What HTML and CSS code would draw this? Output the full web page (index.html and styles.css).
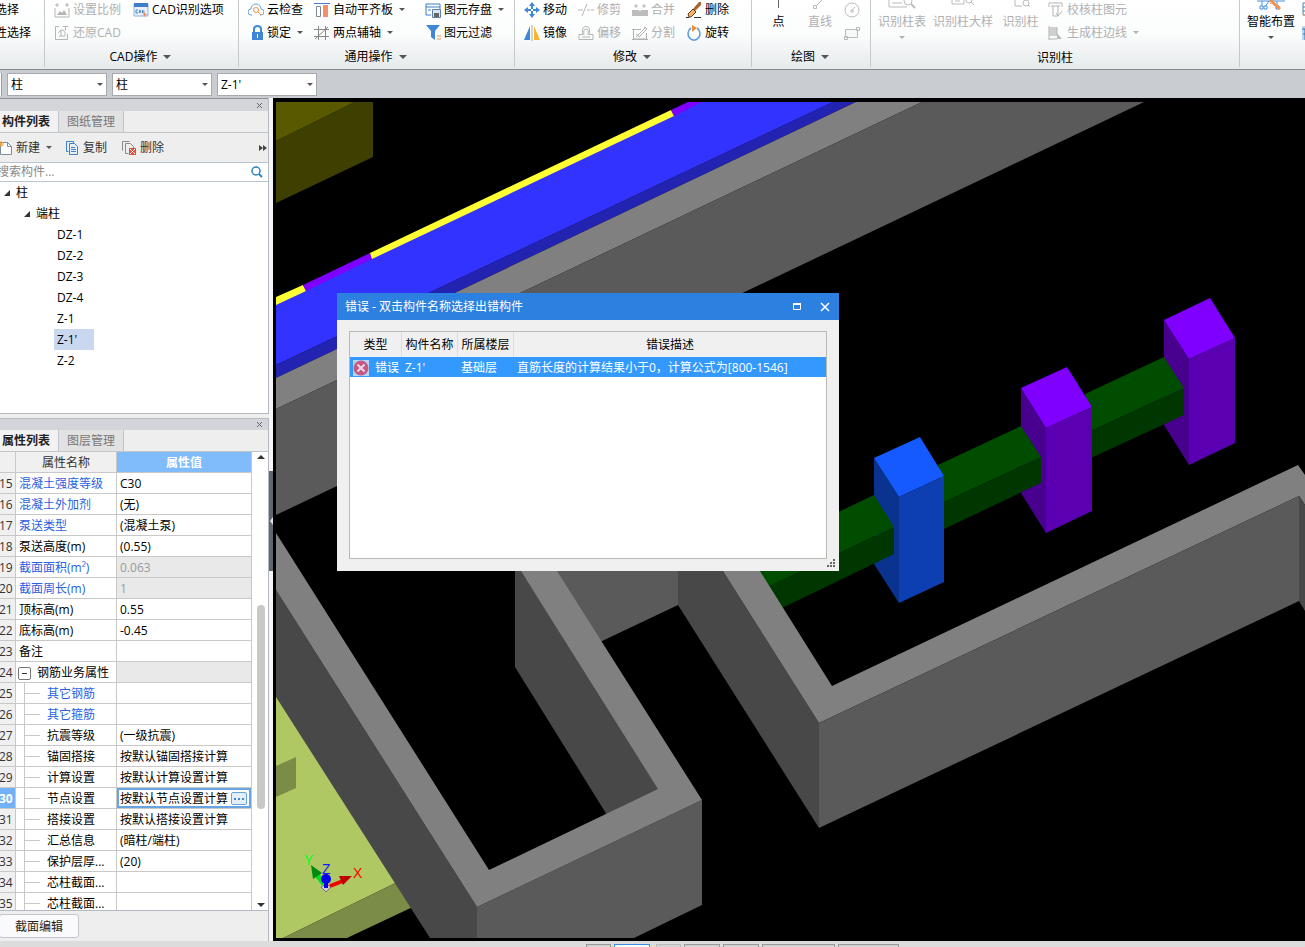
FILE: index.html
```html
<!DOCTYPE html>
<html lang="zh-CN">
<head>
    <meta charset="UTF-8">
    <meta name="viewport" content="width=device-width, initial-scale=1.0">
    <title>柱 - 构件列表</title>
    <link rel="stylesheet" href="styles.css">
</head>
<body>
    <header class="ribbon">
        <section class="group">
            <div class="tools tools-select">
                <button class="tool">选择</button>
                <button class="tool">性选择</button>
            </div>
        </section>

        <section class="group">
            <div class="tools tools-cad">
                <button class="tool" disabled>
                    <svg class="icon" viewBox="0 0 16 16"><path d="M1 3h4M3 1v4M11 3h4M13 1v4M1 6v9h14V6" fill="none" stroke="#b5b5b5"/><path d="M3 13l3-4 2 2 2-3 3 5z" fill="#b5b5b5"/></svg>
                    设置比例</button>
                <button class="tool">
                    <svg class="icon" viewBox="0 0 16 16"><path d="M1 2h14v12H1z" fill="#e8f1fb" stroke="#8db4de"/><path d="M1 1h14v4H1z" fill="#3d7fc9"/><path d="M5 8H3v3h2M6 11l1-3 1 3M9.500 8v3q3-1.500 0-3" fill="none" stroke="#4a86c8"/><path d="M10 9l4 4-2 .5-1 2z" fill="#f08a5a"/></svg>
                    CAD识别选项</button>
                <button class="tool" disabled>
                    <svg class="icon" viewBox="0 0 16 16"><path d="M5 1.500H1.500v13h12V9M9 1.500h5M11.500 1.500v4M4 8l3-3v6M7 5q5 0 4 6H5" fill="none" stroke="#b5b5b5"/></svg>
                    还原CAD</button>
            </div>
            <div class="caption">CAD操作 <i class="caret"></i></div>
        </section>

        <section class="group">
            <div class="tools tools-common">
                <button class="tool">
                    <svg class="icon" viewBox="0 0 16 16"><path d="M4 13H3a3 3 0 0 1 0-6 5 5 0 0 1 10 0 3 3 0 0 1 0 6h-1" fill="none" stroke="#6fa3d8"/><circle cx="8" cy="8" r="2.500" fill="none" stroke="#f09050"/><path d="M10 10l3 3" stroke="#f09050"/></svg>
                    云检查</button>
                <button class="tool">
                    <svg class="icon" viewBox="0 0 16 16"><path d="M0 1.500h16" stroke="#3d7fc9" stroke-width="1"/><path d="M2.500 4.500h4v10h-4z" fill="#fff" stroke="#7d8794"/><path d="M9 3h5v12H9z" fill="#f79069"/></svg>
                    自动平齐板 <i class="caret small"></i></button>
                <button class="tool">
                    <svg class="icon" viewBox="0 0 16 16"><path d="M1 2h14v3H1zM1 5v8h5M3 8h3M15 5v2" fill="none" stroke="#3d7fc9"/><path d="M7.500 7.500h8v8h-8z" fill="#d9e6f5" stroke="#5c7fa6"/><path d="M9 11h5v4H9z" fill="#666"/></svg>
                    图元存盘 <i class="caret small"></i></button>
                <button class="tool">
                    <svg class="icon" viewBox="0 0 16 16"><path d="M4 7h11v8H4z" fill="#3f86d6"/><path d="M6 7V4a3.500 3 0 0 1 7 0v3" fill="none" stroke="#3f86d6" stroke-width="2"/><path d="M9 9h1v4H9z" fill="#fff"/></svg>
                    锁定 <i class="caret small"></i></button>
                <button class="tool">
                    <svg class="icon" viewBox="0 0 16 16"><path d="M4.500 1v14M11.500 1v14M0 4.500h15M0 11.500h15M1 14L14 2" fill="none" stroke="#888"/></svg>
                    两点辅轴 <i class="caret small"></i></button>
                <button class="tool">
                    <svg class="icon" viewBox="0 0 16 16"><path d="M1 0h14l-5 6v9l-4-3V6z" fill="#3f86d6"/><path d="M12 11h4M12 14h4" stroke="#f09050"/></svg>
                    图元过滤</button>
            </div>
            <div class="caption">通用操作 <i class="caret"></i></div>
        </section>

        <section class="group">
            <div class="tools tools-modify">
                <button class="tool">
                    <svg class="icon" viewBox="0 0 16 16"><path d="M8 0l3 4H5zM8 16l3-4H5zM0 8l4-3v6zM16 8l-4-3v6z" fill="#3f86d6"/><path d="M8 4v3M8 9v3M4 8h3M9 8h3" stroke="#3f86d6" stroke-width="2"/></svg>
                    移动</button>
                <button class="tool" disabled>
                    <svg class="icon" viewBox="0 0 16 16"><path d="M0 8h5M9 8h3M13 8h3M4 14L9 2" fill="none" stroke="#b5b5b5"/></svg>
                    修剪</button>
                <button class="tool" disabled>
                    <svg class="icon" viewBox="0 0 16 16"><path d="M2 4h4M4 2v4M10 4h4M12 2v4" stroke="#b5b5b5"/><path d="M0 8h7v1h2V8h7v6H0z" fill="#bcbcbc"/></svg>
                    合并</button>
                <button class="tool">
                    <svg class="icon" viewBox="0 0 16 16"><path d="M0 15.500h3M8 15.500h7" stroke="#333"/><path d="M15 0l-2 0-6 7 2 2 6-6z" fill="#a8642c"/><path d="M7 7l3 3-5 5H3l-1-3z" fill="#f2b46c" stroke="#6b3b12"/></svg>
                    删除</button>
                <button class="tool">
                    <svg class="icon" viewBox="0 0 16 16"><path d="M6 1v14H0z" fill="#3f86d6"/><path d="M10 1v14h6z" fill="#f5b62e"/><path d="M8 0v16" stroke="#aaa"/></svg>
                    镜像</button>
                <button class="tool" disabled>
                    <svg class="icon" viewBox="0 0 16 16"><path d="M1 14.500v-5h4q-2-8 3-8t3 8h4v5zM4 12h8M6 10q-1-6 2-6t2 6" fill="none" stroke="#b5b5b5"/></svg>
                    偏移</button>
                <button class="tool" disabled>
                    <svg class="icon" viewBox="0 0 16 16"><path d="M0 4.500h9M1.500 4v10h13V8M0 14.500h16M4 12L14 2M4 9l4 3M12 2l3 2-7 7" fill="none" stroke="#b0b0b0"/></svg>
                    分割</button>
                <button class="tool">
                    <svg class="icon" viewBox="0 0 16 16"><path d="M11 3a6 6.500 0 1 1-6 0" fill="none" stroke="#5a9bdd" stroke-width="1.500"/><path d="M6 0l5 3-5 4z" fill="#f08a3a"/></svg>
                    旋转</button>
            </div>
            <div class="caption">修改 <i class="caret"></i></div>
        </section>

        <section class="group">
            <div class="tools tools-draw">
                <button class="tool big"><svg class="icon-top" viewBox="0 0 16 10"><path d="M7.500 0v8" stroke="#666"/></svg>点</button>
                <button class="tool big" disabled><svg class="icon-top" viewBox="0 0 16 10"><path d="M5 5l5-5M1.500 5.500h3v3h-3z" fill="none" stroke="#bbb"/></svg>直线</button>
                <button class="tool" disabled aria-label="圆"><svg class="icon" viewBox="0 0 16 16"><circle cx="8" cy="8" r="7" fill="none" stroke="#bbb"/><path d="M8 8l3-3M7 8h2v2H7z" fill="none" stroke="#bbb"/></svg></button>
                <button class="tool" disabled aria-label="矩形"><svg class="icon" viewBox="0 0 16 16"><path d="M1.500 4.500h12v8h-12zM12.500 2.500h3v3h-3zM.5 11.500h3v3h-3z" fill="#f6f7f7" stroke="#bbb"/></svg></button>
            </div>
            <div class="caption">绘图 <i class="caret"></i></div>
        </section>

        <section class="group">
            <div class="tools tools-detect">
                <button class="tool big" disabled><svg class="icon-wide" viewBox="0 0 28 10"><path d="M1 0v7h18M4 3h10" fill="none" stroke="#bbb"/><circle cx="20" cy="1" r="4" fill="none" stroke="#bbb"/><path d="M23 4l4 4" stroke="#bbb" stroke-width="2"/></svg>识别柱表<i class="caret small"></i></button>
                <button class="tool big" disabled><svg class="icon-wide" viewBox="0 0 28 10"><path d="M3 0v4h12V0M6 1h5" fill="none" stroke="#bbb"/><circle cx="20" cy="0" r="3" fill="none" stroke="#bbb"/><path d="M22 2l3 3" stroke="#bbb"/></svg>识别柱大样</button>
                <button class="tool big" disabled><svg class="icon-wide" viewBox="0 0 28 10"><path d="M8 0v6h7" fill="none" stroke="#bbb"/><circle cx="19" cy="3" r="3" fill="none" stroke="#bbb"/><path d="M21 5l2 2" stroke="#bbb"/></svg>识别柱</button>
                <button class="tool" disabled>
                    <svg class="icon" viewBox="0 0 16 16"><path d="M1 5V1h13v4M3 4h9M5 4v10h5V4M8 11l2 3 4-5" fill="none" stroke="#b5b5b5"/></svg>
                    校核柱图元</button>
                <button class="tool" disabled>
                    <svg class="icon" viewBox="0 0 16 16"><path d="M1 2h8v9H1z" fill="#d0d0d0"/><path d="M1 1v14M1 14h8M9 2v8" fill="none" stroke="#b5b5b5"/><path d="M9 8l5 6H9z" fill="#bbb"/></svg>
                    生成柱边线 <i class="caret small"></i></button>
            </div>
            <div class="caption caption-low">识别柱</div>
        </section>

        <section class="group">
            <div class="tools tools-smart">
                <button class="tool big"><svg class="icon-wide" viewBox="0 0 28 10"><path d="M0 1h28M5 1v6M20 1v6M12 1L8 7" fill="none" stroke="#4a90d9"/><path d="M3 6h3v3H3zM7 6h3v3H7zM19 6h3v3h-3z" fill="#fff" stroke="#4a90d9"/><path d="M13 0l10 9" stroke="#ef9350" stroke-width="3"/><path d="M13 4l4-4" stroke="#ef9350"/></svg>智能布置<i class="caret small"></i></button>
                <button class="tool" aria-label="表格"><svg class="icon" viewBox="0 0 16 16"><path d="M1 1h14v12H1zM1 5h14M1 9h14" fill="none" stroke="#4a80b8"/><path d="M1 13h14" stroke="#ef9350"/></svg></button>
                <button class="tool" aria-label="布置"><svg class="icon" viewBox="0 0 16 16"><path d="M0 1h16v14H0z" fill="#b7d6f5"/><path d="M0 4h16M3 4v11M1 9h5" fill="none" stroke="#2f74bd"/></svg></button>
            </div>
        </section>
    </header>

    <nav class="combo-bar">
        <span class="combo-edge"></span>
        <label class="combo"><select aria-label="构件类型"><option>柱</option></select><i class="caret small"></i></label>
        <label class="combo"><select aria-label="构件分类"><option>柱</option></select><i class="caret small"></i></label>
        <label class="combo"><select aria-label="构件名称"><option>Z-1'</option></select><i class="caret small"></i></label>
    </nav>

    <main class="workspace">
        <aside class="dock">
            <section class="panel panel-list">
                <div class="panel-bar"><button class="close" aria-label="关闭"><svg viewBox="0 0 7 7"><path d="M1 1l5 5M6 1L1 6" stroke="#666" fill="none"/></svg></button></div>
                <div class="tabs">
                    <button class="tab active">构件列表</button>
                    <button class="tab">图纸管理</button>
                </div>
                <div class="toolbar">
                    <button class="tool tool-new">
                        <svg class="icon" viewBox="0 0 16 16"><path d="M3.500 2.500h7l4 4v8h-11z" fill="#fff" stroke="#7d8da0"/><path d="M10.500 2.500v4h4" fill="none" stroke="#7d8da0"/><path d="M1 4h6M4 1v6M2 2l4 4M6 2L2 6" stroke="#f0a030"/></svg>
                        新建 <i class="caret small"></i></button>
                    <button class="tool">
                        <svg class="icon" viewBox="0 0 16 16"><path d="M2.500 1.500h7v2M2.500 1.500v10h2" fill="none" stroke="#3d7fc9"/><path d="M5.500 3.500h5l3 3v8h-8z" fill="#e6f0fb" stroke="#3d7fc9"/><path d="M7 7.500h4M7 9.500h5M7 11.500h5" stroke="#3d7fc9"/></svg>
                        复制</button>
                    <button class="tool">
                        <svg class="icon" viewBox="0 0 16 16"><path d="M1.500 10.500v-9h7M4.500 13.500v-10h5l3 3v2M4.500 13.500h3" fill="none" stroke="#8a8a8a"/><path d="M8 8h7v7H8z" fill="#e05040"/><path d="M9 9l5 5M14 9l-5 5" stroke="#fff"/></svg>
                        删除</button>
                    <button class="more" aria-label="更多"><svg viewBox="0 0 8 6"><path d="M0 0l4 3-4 3zM4 0l4 3-4 3z" fill="#444"/></svg></button>
                </div>
                <div class="search">
                    <input type="text" placeholder="搜索构件..." aria-label="搜索构件">
                    <svg viewBox="0 0 12 12"><circle cx="5" cy="5" r="4" fill="none" stroke="#2a82c0" stroke-width="1.500"/><path d="M8 8l3 3" stroke="#2a82c0" stroke-width="2"/></svg>
                </div>
                <ul class="tree">
                    <li><div class="node"><i class="fold"></i>柱</div>
                        <ul>
                            <li><div class="node"><i class="fold"></i>端柱</div>
                                <ul class="leaves">
                                    <li>DZ-1</li>
                                    <li>DZ-2</li>
                                    <li>DZ-3</li>
                                    <li>DZ-4</li>
                                    <li>Z-1</li>
                                    <li class="selected">Z-1'</li>
                                    <li>Z-2</li>
                                </ul>
                            </li>
                        </ul>
                    </li>
                </ul>
            </section>

            <section class="panel panel-props">
                <div class="panel-bar"><button class="close" aria-label="关闭"><svg viewBox="0 0 7 7"><path d="M1 1l5 5M6 1L1 6" stroke="#666" fill="none"/></svg></button></div>
                <div class="tabs">
                    <button class="tab active">属性列表</button>
                    <button class="tab">图层管理</button>
                </div>
                <div class="props">
                    <div class="props-view">
                        <table class="props-table">
                            <colgroup><col class="col-no"><col class="col-name"><col></colgroup>
                            <thead>
                                <tr><th></th><th>属性名称</th><th class="current">属性值</th></tr>
                            </thead>
                            <tbody>
                                <tr><th>15</th><td class="link">混凝土强度等级</td><td>C30</td></tr>
                                <tr><th>16</th><td class="link">混凝土外加剂</td><td>(无)</td></tr>
                                <tr><th>17</th><td class="link">泵送类型</td><td>(混凝土泵)</td></tr>
                                <tr><th>18</th><td>泵送高度(m)</td><td>(0.55)</td></tr>
                                <tr><th>19</th><td class="link">截面面积(m²)</td><td class="readonly">0.063</td></tr>
                                <tr><th>20</th><td class="link">截面周长(m)</td><td class="readonly">1</td></tr>
                                <tr><th>21</th><td>顶标高(m)</td><td>0.55</td></tr>
                                <tr><th>22</th><td>底标高(m)</td><td>-0.45</td></tr>
                                <tr><th>23</th><td>备注</td><td></td></tr>
                                <tr><th>24</th><td class="parent"><button class="toggle" aria-label="折叠"></button>钢筋业务属性</td><td class="readonly"></td></tr>
                                <tr><th>25</th><td class="child link">其它钢筋</td><td></td></tr>
                                <tr><th>26</th><td class="child link">其它箍筋</td><td></td></tr>
                                <tr><th>27</th><td class="child">抗震等级</td><td>(一级抗震)</td></tr>
                                <tr><th>28</th><td class="child">锚固搭接</td><td>按默认锚固搭接计算</td></tr>
                                <tr><th>29</th><td class="child">计算设置</td><td>按默认计算设置计算</td></tr>
                                <tr class="editing"><th>30</th><td class="child">节点设置</td><td><div class="edit-cell">按默认节点设置计算<button class="browse" aria-label="浏览"><svg viewBox="0 0 10 2"><path d="M0 0h2v2H0zM4 0h2v2H4zM8 0h2v2H8z" fill="#4a86c8"/></svg></button></div></td></tr>
                                <tr><th>31</th><td class="child">搭接设置</td><td>按默认搭接设置计算</td></tr>
                                <tr><th>32</th><td class="child">汇总信息</td><td>(暗柱/端柱)</td></tr>
                                <tr><th>33</th><td class="child">保护层厚...</td><td>(20)</td></tr>
                                <tr><th>34</th><td class="child">芯柱截面...</td><td></td></tr>
                                <tr><th>35</th><td class="child">芯柱截面...</td><td></td></tr>
                            </tbody>
                        </table>
                    </div>
                    <div class="scroll">
                        <i class="scroll-up"></i>
                        <div class="scroll-track"><div class="scroll-thumb"></div></div>
                        <i class="scroll-down"></i>
                    </div>
                </div>
                <div class="panel-foot"><button class="section-edit">截面编辑</button></div>
            </section>
        </aside>

        <div class="splitter"><button class="handle" aria-label="收起"></button></div>

        <section class="viewport">
            <svg class="scene" viewBox="276 102 1029 836" preserveAspectRatio="xMinYMin slice">
                <!-- slab, top left -->
                <polygon points="276,102 355,102 276,141" fill="#595900"/>
                <polygon points="355,102 373,102 373,157 276,203 276,141" fill="#3f3f00"/>

                <!-- blue beam with its edge strip -->
                <polygon points="276,300 690,102 833,102 276,365" fill="#3333ff"/>
                <polygon points="276,365 833,102 856,102 276,378" fill="#2323b2"/>
                <polygon points="276,297 303,285 306,291 276,305" fill="#ffff33"/>
                <polygon points="303,285 370,253 372,259 306,291" fill="#8000ff"/>
                <polygon points="370,253 671,110 674,116 372,259" fill="#ffff33"/>
                <polygon points="671,110 688,102 702,102 674,116" fill="#8000ff"/>

                <!-- long wall -->
                <polygon points="276,378 856,102 922,102 276,409" fill="#808080"/>
                <polygon points="276,409 922,102 1144,102 276,515" fill="#5a5a5a"/>

                <!-- floor, runs on under the room wall -->
                <polygon points="276,690 300,697 420,871 283,938 276,938" fill="#b0c864"/>
                <polygon points="283,938 420,871 436,896 347,938" fill="#7b8c46"/>
                <polygon points="276,766 296,757 296,788 276,797" fill="#7b8c46"/>

                <!-- left room -->
                <polygon points="515,560 521,571 662,789 607,815 515,667" fill="#484848"/>
                <polygon points="545,560 678,560 678,605 600,642" fill="#5a5a5a"/>
                <polygon points="276,590 477,907 477,938 430,938 276,697" fill="#484848"/>
                <polygon points="477,907 702,800 702,905 634,938 477,938" fill="#5a5a5a"/>
                <polygon points="276,533 489,870 658,789 514,560 550,560 702,800 477,907 276,590" fill="#808080"/>

                <!-- columns, shaded side -->
                <polygon points="874,458 899,497 899,603 874,564" fill="#0a328f"/>
                <polygon points="1021,388 1046,428 1046,533 1021,493" fill="#48008f"/>
                <polygon points="1164,320 1189,359 1189,465 1164,425" fill="#48008f"/>

                <!-- green beams -->
                <polygon points="740,559 874,495 894,527 770,586" fill="#004d00"/>
                <polygon points="770,586 894,527 894,554 782,608 765,588" fill="#003600"/>
                <polygon points="938,465 1021,426 1041,457 944,502" fill="#004d00"/>
                <polygon points="944,502 1041,457 1041,483 944,529" fill="#003600"/>
                <polygon points="1085,394 1164,357 1184,388 1091,431" fill="#004d00"/>
                <polygon points="1091,431 1184,388 1184,415 1091,458" fill="#003600"/>

                <!-- columns, top and front -->
                <polygon points="874,458 920,437 944,476 899,497" fill="#145aff"/>
                <polygon points="899,497 944,476 944,582 899,603" fill="#0e3fb2"/>
                <polygon points="1021,388 1067,367 1092,407 1046,428" fill="#8000ff"/>
                <polygon points="1046,428 1092,407 1092,511 1046,533" fill="#5a00b2"/>
                <polygon points="1164,320 1210,298 1235,338 1189,359" fill="#8000ff"/>
                <polygon points="1189,359 1235,338 1235,443 1189,465" fill="#5a00b2"/>

                <!-- right room -->
                <polygon points="678,560 716,560 819,723 819,828 678,605" fill="#484848"/>
                <polygon points="716,560 753,560 832,686 1298,465 1305,475 1305,505 1299,496 819,723" fill="#808080"/>
                <polygon points="819,723 1299,496 1299,601 819,828" fill="#5a5a5a"/>
                <polygon points="1299,496 1305,505 1305,611 1299,601" fill="#484848"/>

                <!-- axis gizmo -->
                <path d="M321 887l5-3 5 3-5 5z" fill="#d8c8d8" stroke="#777"/>
                <path d="M324 884l-7-9" stroke="#00e020" stroke-width="5"/>
                <path d="M311 865l11 8-9 6z" fill="#008a10"/>
                <path d="M330 886l13-5" stroke="#f00000" stroke-width="4"/>
                <path d="M339 876l13 0-9 9z" fill="#c00000"/>
                <path d="M326 888v-8" stroke="#0000e0" stroke-width="4"/>
                <circle cx="326" cy="879" r="5" fill="#0000f0"/>
                <g class="axis">
                    <text x="353" y="878" fill="#ff0000">X</text>
                    <text x="304" y="865" fill="#00ff20">Y</text>
                    <text x="322" y="874" fill="#1a1aff">Z</text>
                </g>
            </svg>

            <div class="dialog" role="dialog" aria-labelledby="dialog-title">
                <div class="dialog-head">
                    <span id="dialog-title">错误 - 双击构件名称选择出错构件</span>
                    <button class="win" aria-label="最大化"><svg viewBox="0 0 10 10"><path d="M1.500 2.500h7v5h-7z" fill="none" stroke="#fff"/><path d="M1 2h8" stroke="#fff" stroke-width="2"/></svg></button>
                    <button class="win" aria-label="关闭"><svg viewBox="0 0 10 10"><path d="M1 1l8 8M9 1L1 9" fill="none" stroke="#fff" stroke-width="1.500"/></svg></button>
                </div>
                <div class="dialog-body">
                    <div class="errors">
                        <table class="error-table">
                            <colgroup><col class="col-type"><col class="col-part"><col class="col-part"><col></colgroup>
                            <thead>
                                <tr><th>类型</th><th>构件名称</th><th>所属楼层</th><th>错误描述</th></tr>
                            </thead>
                            <tbody>
                                <tr>
                                    <td><div class="type-cell"><svg class="icon" viewBox="0 0 16 16"><path d="M0 0h16v16H0z" fill="#b8d4f0"/><circle cx="8" cy="8" r="7.500" fill="#b85f96"/><circle cx="8" cy="8" r="6" fill="#cf5578"/><path d="M4.500 4.500l7 7M11.500 4.500l-7 7" stroke="#e4dced" stroke-width="2"/></svg>错误</div></td>
                                    <td>Z-1'</td>
                                    <td>基础层</td>
                                    <td>直筋长度的计算结果小于0，计算公式为[800-1546]</td>
                                </tr>
                            </tbody>
                        </table>
                    </div>
                    <svg class="grip" viewBox="0 0 8 8"><path d="M6 0h2v2H6zM3 3h2v2H3zM6 3h2v2H6zM0 6h2v2H0zM3 6h2v2H3zM6 6h2v2H6z" fill="#666"/></svg>
                </div>
            </div>
        </section>
    </main>

    <footer class="status">
        <span class="chip w24"></span>
        <span class="chip w36 on"></span>
        <span class="chip w24 off"></span>
        <span class="chip w36"></span>
        <span class="chip w36"></span>
        <span class="chip w72"></span>
        <span class="chip w60"></span>
    </footer>
</body>
</html>
```
FILE: styles.css
```css
* {
    box-sizing: border-box;
}
body {
    margin: 0;
    height: 100vh;
    display: flex;
    flex-direction: column;
    overflow: hidden;
    background: #eeeeee;
    color: #000;
    font-family: "Open Sans", "Noto Sans CJK SC", sans-serif;
    font-size: 12px;
    line-height: 20px;
    white-space: nowrap;
}
button, input, select {
    margin: 0;
    padding: 0;
    border: none;
    background: none;
    color: inherit;
    font: inherit;
}
ul {
    margin: 0;
    padding: 0;
    list-style: none;
}
svg {
    display: block;
    flex: none;
}
.icon {
    width: 16px;
    height: 16px;
}
.caret {
    flex: none;
    display: inline-block;
    border: 4px solid transparent;
    border-top-color: #555;
    border-bottom: none;
}
.caret.small {
    border-width: 3px;
    border-bottom: none;
}

/* ribbon */
.ribbon {
    flex: none;
    display: grid;
    grid-template-columns: 45px 194px 276px 237px 119px 369px 1fr;
    height: 70px;
    overflow: hidden;
    background: linear-gradient(#ffffff, #fbfcfc 50%, #e6eaeb);
    border-bottom: 1px solid #85888b;
}
.group {
    position: relative;
    height: 67px;
    overflow: hidden;
    border-right: 1px solid #c6c9cc;
}
.group:last-child {
    border-right: none;
}
.tools {
    display: grid;
    grid-template-rows: 23px 23px;
    margin-top: -2px;
    padding-left: 9px;
}
.tools-select {
    padding-left: 0;
    margin-left: -5px;
}
.tools-cad {
    grid-template-columns: 79px 1fr;
}
.tools-common {
    grid-template-columns: 66px 111px 1fr;
}
.tools-modify {
    grid-template-columns: repeat(4, 54px);
}
.tools-draw {
    grid-template-columns: 35px 48px 1fr;
    grid-auto-flow: column;
}
.tools-detect {
    grid-template-columns: 62px 60px 55px 1fr;
    grid-auto-flow: column;
    padding-left: 0;
}
.tools-smart {
    grid-template-columns: 62px 1fr;
    grid-auto-flow: column;
    padding-left: 0;
}
.tool {
    display: flex;
    align-items: center;
    gap: 3px;
}
.tool .caret {
    margin-left: 3px;
}
.tool:disabled {
    color: #b0b0b0;
}
.tool:disabled .caret {
    border-top-color: #b0b0b0;
}
.tool.big {
    grid-row: span 2;
    flex-direction: column;
    gap: 2px;
    padding-top: 2px;
}
.tool.big .caret {
    margin: 2px 0 0;
}
.icon-top {
    width: 16px;
    height: 10px;
}
.icon-wide {
    width: 28px;
    height: 10px;
}
.caption {
    display: flex;
    justify-content: center;
    align-items: center;
    gap: 6px;
    height: 25px;
    padding-right: 2px;
}
.caption-low {
    height: 28px;
    padding-right: 0;
}

/* selectors under the ribbon */
.combo-bar {
    flex: none;
    display: flex;
    align-items: center;
    gap: 5px;
    height: 28px;
    background: #c9ccd1;
}
.combo-edge {
    width: 2px;
    height: 23px;
    background: #fff;
    border-right: 1px solid #9a9da2;
}
.combo {
    position: relative;
    width: 100px;
}
.combo select {
    display: block;
    width: 100%;
    height: 23px;
    padding: 1px 3px 0;
    appearance: none;
    background: #fff;
    border: 1px solid #a6a9ae;
}
.combo .caret {
    position: absolute;
    right: 4px;
    top: 10px;
}

/* left dock */
.workspace {
    flex: 1;
    min-height: 0;
    display: grid;
    grid-template-columns: 269px 4px 1fr;
}
.dock {
    display: flex;
    flex-direction: column;
    gap: 4px;
    min-height: 0;
    overflow: hidden;
}
.panel {
    display: flex;
    flex-direction: column;
    border-right: 1px solid #b5bac0;
    background: #eeeeee;
}
.panel-list {
    flex: 0 0 316px;
    border-bottom: 1px solid #b5bac0;
}
.panel-props {
    flex: 1;
    min-height: 0;
}
.panel-bar {
    flex: none;
    display: flex;
    justify-content: flex-end;
    align-items: center;
    height: 12px;
    padding-right: 5px;
    background: #d3d5da;
    border-top: 1px solid #b9bcc1;
}
.panel-list .panel-bar {
    height: 13px;
    border-color: #8e9196;
}
.close svg {
    width: 7px;
    height: 7px;
}
.tabs {
    flex: none;
    display: flex;
    height: 22px;
    border-bottom: 1px solid #c0c6cc;
    background: #eeeeee;
}
.tab {
    padding: 0 8px;
    color: #777;
    background: #e2e2e2;
    border-right: 1px solid #c0c6cc;
}
.tab.active {
    padding: 0 8px 0 2px;
    color: #222;
    font-weight: bold;
    background: #f2f2f2;
}
.toolbar {
    flex: none;
    display: flex;
    align-items: center;
    gap: 14px;
    height: 29px;
    padding-right: 1px;
    color: #333;
}
.toolbar .tool-new {
    margin-left: -3px;
    margin-right: -2px;
}
.more {
    margin-left: auto;
}
.more svg {
    width: 8px;
    height: 6px;
}
.search {
    flex: none;
    display: flex;
    align-items: center;
    height: 20px;
    padding-right: 5px;
    background: #fff;
    border: solid #b9c6d0;
    border-width: 1px 0;
}
.search input {
    flex: 1;
    min-width: 0;
    height: 18px;
    margin-left: -3px;
    outline: none;
}
.search input::placeholder {
    color: #888;
    opacity: 1;
}
.search svg {
    width: 12px;
    height: 12px;
}
.tree {
    flex: 1;
    background: #fff;
    line-height: 21px;
}
.node {
    display: flex;
    align-items: center;
    gap: 6px;
    padding-left: 4px;
}
.tree ul .node {
    padding-left: 24px;
}
.fold {
    border: solid transparent;
    border-width: 0 0 6px 6px;
    border-bottom-color: #333;
}
.leaves li {
    width: 40px;
    margin-left: 54px;
    padding-left: 3px;
}
.leaves .selected {
    background: #cad8ef;
}

/* property grid */
.props {
    flex: 1;
    min-height: 0;
    display: flex;
    background: #fff;
    border-bottom: 1px solid #b5bac0;
}
.props-view {
    flex: 1;
    min-width: 0;
    overflow: hidden;
}
.props-table {
    width: 256px;
    margin-left: -4px;
    table-layout: fixed;
    border-collapse: separate;
    border-spacing: 0;
}
.col-no {
    width: 20px;
}
.col-name {
    width: 101px;
}
.props-table th, .props-table td {
    height: 21px;
    padding: 2px 3px 0;
    line-height: 18px;
    border: solid #c8c8c8;
    border-width: 0 1px 1px 0;
    overflow: hidden;
}
.props-table th {
    background: #f0f0f0;
    color: #333;
    font-weight: normal;
}
.props-table thead th {
    text-align: center;
}
.props-table thead .current {
    background: #80bbfb;
    color: #fff;
    font-weight: bold;
}
.props-table tbody th {
    text-align: right;
}
.props-table .link {
    color: #2a5fe0;
}
.props-table .readonly {
    background: #e9e9e9;
    color: #999;
}
.props-table .child {
    padding-left: 31px;
    background: linear-gradient(#c8c8c8, #c8c8c8) 8px 0 / 1px 100% no-repeat,
        linear-gradient(#c8c8c8, #c8c8c8) 8px 10px / 16px 1px no-repeat;
}
.toggle {
    width: 13px;
    height: 13px;
    margin: 0 6px 0 -1px;
    vertical-align: -2px;
    border: 1px solid #777;
    border-radius: 2px;
    background: linear-gradient(#333, #333) center / 5px 1px no-repeat #fff;
}
.props-table .editing th {
    background: #72b1f7;
    color: #fff;
    font-weight: bold;
}
.props-table .editing td:last-child {
    padding: 0;
}
.edit-cell {
    display: flex;
    align-items: center;
    justify-content: space-between;
    height: 20px;
    padding: 1px 2px 0 1px;
    border: 2px solid #68a4e2;
}
.browse {
    display: flex;
    align-items: center;
    justify-content: center;
    width: 16px;
    height: 13px;
    border: 1px solid #68a4e2;
    border-radius: 2px;
    background: #e3effc;
}
.browse svg {
    width: 10px;
    height: 2px;
}
.scroll {
    width: 16px;
    display: flex;
    flex-direction: column;
    align-items: center;
    padding: 3px 0 3px 2px;
}
.scroll-up, .scroll-down {
    border: 4px solid transparent;
}
.scroll-up {
    border-top: none;
    border-bottom-color: #333;
}
.scroll-down {
    border-bottom: none;
    border-top-color: #333;
}
.scroll-track {
    flex: 1;
    padding-top: 146px;
}
.scroll-thumb {
    width: 8px;
    height: 204px;
    border-radius: 4px;
    background: #c8c8c8;
}
.panel-foot {
    flex: none;
    height: 30px;
    padding-top: 3px;
}
.section-edit {
    width: 80px;
    height: 24px;
    margin-left: -1px;
    padding-top: 1px;
    color: #222;
    background: #fafafc;
    border: 1px solid #c3c6cc;
    border-radius: 3px;
}

.splitter {
    display: flex;
    padding-top: 373px;
    background: #f6f6f6;
}
.handle {
    display: flex;
    align-items: center;
    justify-content: flex-end;
    width: 4px;
    height: 100px;
    background: #5f6672;
}
.handle::before {
    content: "";
    border: 4px solid transparent;
    border-left: none;
    border-right: 3px solid #dfe3e8;
}

/* model view */
.viewport {
    position: relative;
    min-width: 0;
    min-height: 0;
    padding: 4px 0 3px 3px;
    background: #000;
}
.scene {
    width: 100%;
    height: 100%;
}
.axis {
    font-size: 14px;
    font-family: "Liberation Sans", sans-serif;
}
.dialog {
    position: absolute;
    left: 64px;
    top: 195px;
    display: flex;
    flex-direction: column;
    width: 502px;
    height: 278px;
    background: #f0f0f0;
}
.dialog-head {
    flex: none;
    display: flex;
    align-items: center;
    gap: 18px;
    height: 27px;
    padding: 0 9px 0 8px;
    color: #fff;
    background: #2c80e0;
}
.dialog-head span {
    flex: 1;
}
.win svg {
    width: 10px;
    height: 10px;
}
.dialog-body {
    position: relative;
    flex: 1;
    padding: 11px 12px 12px;
}
.errors {
    height: 100%;
    background: #fff;
    border: 1px solid #b9b9b4;
}
.error-table {
    width: 100%;
    table-layout: fixed;
    border-collapse: separate;
    border-spacing: 0;
}
.col-type {
    width: 52px;
}
.col-part {
    width: 56px;
}
.error-table th {
    height: 25px;
    padding: 1px 0 0;
    font-weight: normal;
    text-align: center;
    background: #f0f0f0;
    border-right: 1px solid #dcdcdc;
}
.error-table th:last-child {
    border-right: none;
}
.error-table td {
    height: 20px;
    padding: 2px 3px 0;
    line-height: 18px;
    color: #fff;
    background: #3399ff;
}
.type-cell {
    display: flex;
    align-items: center;
    gap: 6px;
}
.grip {
    position: absolute;
    right: 4px;
    bottom: 4px;
    width: 8px;
    height: 8px;
}

/* status bar */
.status {
    flex: none;
    display: flex;
    gap: 3px;
    height: 6px;
    padding: 3px 0 0 586px;
    background: #dcdcdc;
}
.chip {
    height: 3px;
    border: 1px solid #999;
    border-bottom: none;
    background: #d2d2d2;
}
.chip.on {
    background: #fff;
    border-color: #3a8ee0;
}
.chip.off {
    margin-left: 3px;
    border-color: #bbb;
}
.w24 {
    width: 25px;
}
.w36 {
    width: 36px;
}
.w60 {
    width: 61px;
}
.w72 {
    width: 73px;
}
```
